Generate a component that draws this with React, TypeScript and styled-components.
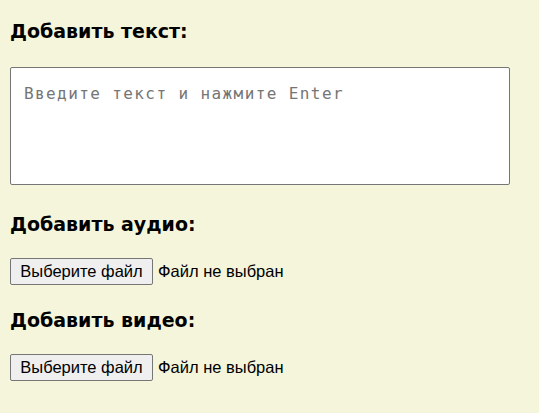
import React from "react";
import styled, { createGlobalStyle } from "styled-components";

const GlobalStyle = createGlobalStyle`
  html, body {
    margin: 0;
    padding: 0;
    background: #f5f5dc;
  }
  body {
    font-family: "Liberation Sans", Arial, sans-serif;
    color: #000;
  }
`;

const Page = styled.div`
  padding: 10px;
  display: flex;
  flex-direction: column;
  align-items: flex-start;
`;

const Heading = styled.h3<{ $first?: boolean }>`
  margin: 0;
  font-family: "DejaVu Sans", "Liberation Sans", sans-serif;
  font-weight: 900;
  font-size: 19px;
  line-height: 22px;
  padding-top: ${(p) => (p.$first ? "10px" : "24px")};
  padding-bottom: ${(p) => (p.$first ? "25px" : "23px")};
`;

const TextArea = styled.textarea`
  box-sizing: border-box;
  width: 500px;
  height: 118px;
  margin: 0 0 4px;
  padding: 16px 13px;
  border: 1px solid #767676;
  border-radius: 2px;
  background: #fff;
  resize: none;
  font-family: "DejaVu Sans Mono", "Liberation Mono", monospace;
  font-size: 16px;
  letter-spacing: 1.4px;
  color: #000;
  &::placeholder {
    color: #757575;
  }
`;

const FileRow = styled.div`
  display: flex;
  align-items: center;
  gap: 5px;
`;

const FileButton = styled.button`
  box-sizing: border-box;
  height: 27px;
  width: 143px;
  padding: 0 6px;
  margin: 0;
  border: 1px solid #767676;
  border-radius: 2px;
  background: #efefef;
  font-family: "Liberation Sans", Arial, sans-serif;
  font-size: 16.5px;
  color: #000;
`;

const FileStatus = styled.span`
  font-family: "Liberation Sans", Arial, sans-serif;
  font-size: 16.5px;
`;

function FilePicker() {
  return (
    <FileRow>
      <FileButton type="button">Выберите файл</FileButton>
      <FileStatus>Файл не выбран</FileStatus>
    </FileRow>
  );
}

export default function App() {
  return (
    <>
      <GlobalStyle />
      <Page>
        <Heading $first>Добавить текст:</Heading>
        <TextArea placeholder="Введите текст и нажмите Enter" />
        <Heading>Добавить аудио:</Heading>
        <FilePicker />
        <Heading>Добавить видео:</Heading>
        <FilePicker />
      </Page>
    </>
  );
}
